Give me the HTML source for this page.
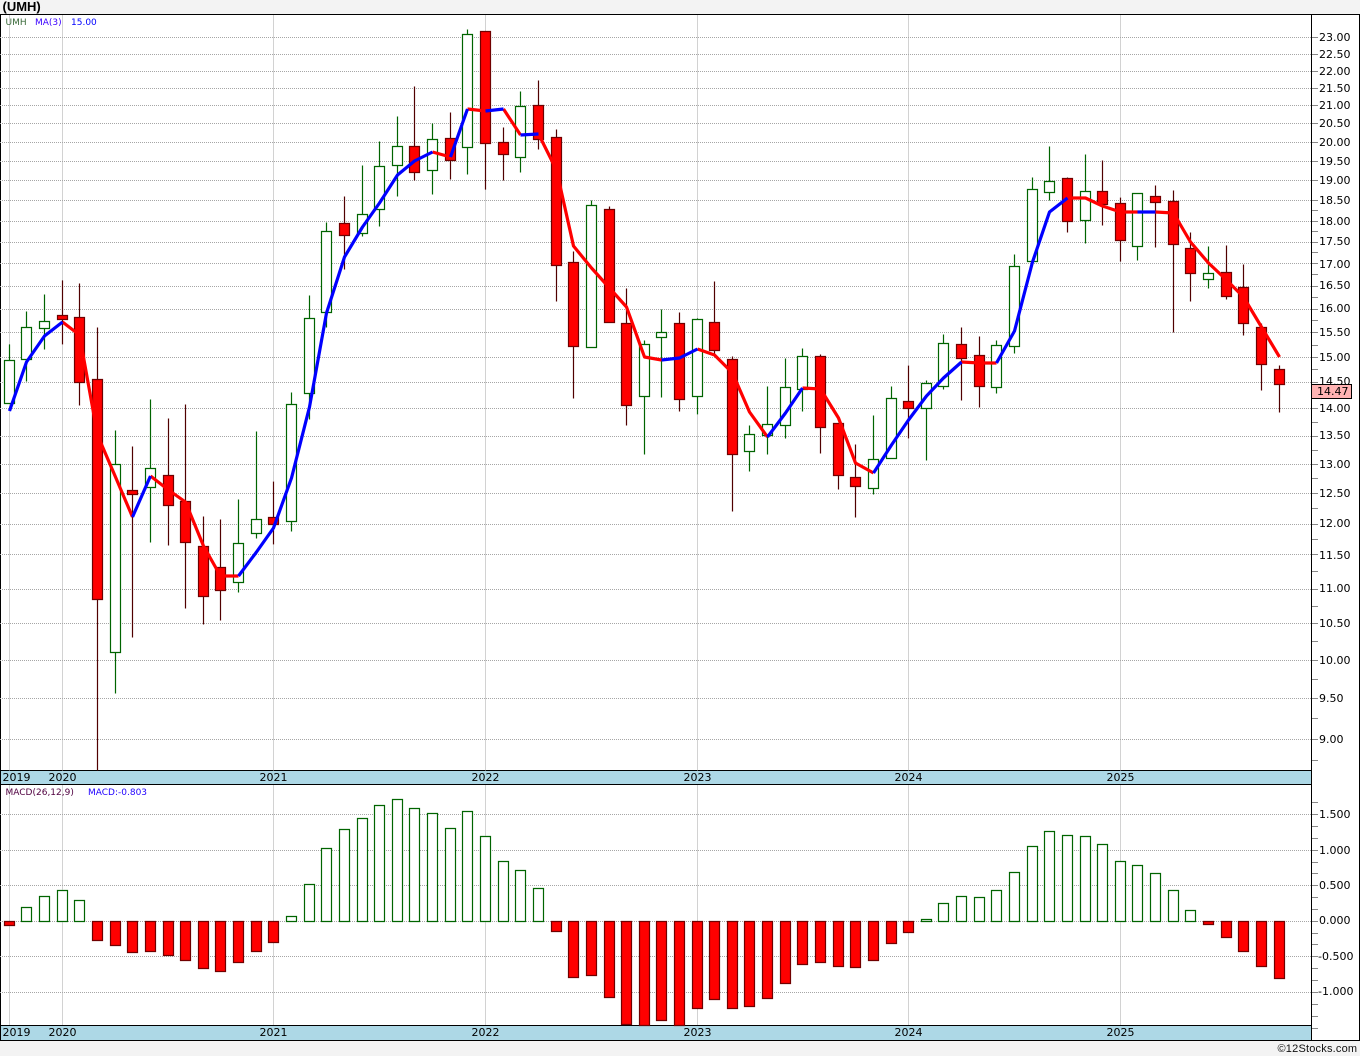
<!DOCTYPE html>
<html><head><meta charset="utf-8"><title>UMH</title>
<style>
html,body{margin:0;padding:0;background:#f3f3f3;width:1360px;height:1056px;overflow:hidden}
svg{display:block}
text{font-family:"DejaVu Sans",sans-serif;font-size:11px;fill:#000}
.s{font-size:9px}
</style></head><body>
<svg width="1360" height="1056" viewBox="0 0 1360 1056" xmlns="http://www.w3.org/2000/svg">
<rect x="0" y="15" width="1360" height="1025" fill="#fff"/>
<rect x="0" y="771" width="1311" height="13" fill="#add8e6"/>
<rect x="0" y="1026" width="1311" height="14" fill="#add8e6"/>
<g fill="none" transform="translate(0,.5)">
<g shape-rendering="crispEdges">
<path stroke="#000" d="M0 14H1360M0 770H1311M0 784H1311M0 1025H1311M0 1040H1360"/>
<path stroke="#000" d="M.5 14V1040M1311.5 14V1040M1359.5 14V1040"/>
<path stroke="#a6a6a6" stroke-dasharray="1 1" d="M0 37H1311M0 54H1311M0 71H1311M0 88H1311M0 105H1311M0 123H1311M0 142H1311M0 161H1311M0 180H1311M0 200H1311M0 221H1311M0 242H1311M0 263H1311M0 286H1311M0 309H1311M0 332H1311M0 357H1311M0 382H1311M0 408H1311M0 436H1311M0 464H1311M0 493H1311M0 524H1311M0 554H1311M0 589H1311M0 623H1311M0 660H1311M0 698H1311M0 739H1311M0 814H1311M0 850H1311M0 885H1311M0 921H1311M0 956H1311M0 992H1311"/>
<path stroke="#a6a6a6" stroke-dasharray="1 1" d="M9.5 15V770M62.5 15V770M273.5 15V770M485.5 15V770M697.5 15V770M908.5 15V770M1120.5 15V770M9.5 785V1025M62.5 785V1025M273.5 785V1025M485.5 785V1025M697.5 785V1025M908.5 785V1025M1120.5 785V1025"/>
<path stroke="#888" d="M1312 37h6M1312 54h6M1312 71h6M1312 88h6M1312 105h6M1312 123h6M1312 142h6M1312 161h6M1312 180h6M1312 200h6M1312 210h6M1312 221h6M1312 231h6M1312 242h6M1312 252h6M1312 263h6M1312 274h6M1312 286h6M1312 297h6M1312 309h6M1312 320h6M1312 332h6M1312 345h6M1312 357h6M1312 369h6M1312 382h6M1312 395h6M1312 408h6M1312 422h6M1312 436h6M1312 450h6M1312 464h6M1312 478h6M1312 493h6M1312 508h6M1312 524h6M1312 539h6M1312 554h6M1312 571h6M1312 589h6M1312 606h6M1312 623h6M1312 641h6M1312 660h6M1312 679h6M1312 698h6M1312 718h6M1312 739h6M1312 760h6M1312 802h6M1312 814h6M1312 826h6M1312 838h6M1312 850h6M1312 862h6M1312 873h6M1312 885h6M1312 897h6M1312 909h6M1312 921h6M1312 933h6M1312 944h6M1312 956h6M1312 968h6M1312 980h6M1312 992h6M1312 1004h6M1312 1016h6M1312 1028h6"/>
</g>
<g stroke-width="1.2">
<path stroke="#006400" d="M9.5 344V403M26.5 311V381M44.5 294V349M115.5 430V693M150.5 399V542M238.5 499V592M256.5 431V538M291.5 392V531M309.5 295V419M326.5 222V327M362.5 165V236M379.5 141V226M397.5 116V196M432.5 123V194M467.5 29V174M520.5 91V172M591.5 200V347M644.5 340V454M661.5 309V397M697.5 318V414M749.5 425V471M767.5 386V454M785.5 358V438M802.5 348V411M873.5 415V494M891.5 386V458M926.5 380V460M943.5 334V389M996.5 340V393M1014.5 254V353M1032.5 177V261M1049.5 146V200M1085.5 154V243M1137.5 193V260M1208.5 246V288"/>
<path stroke="#500000" d="M62.5 280V344M79.5 283V405M97.5 327V770M132.5 446V637M168.5 418V545M185.5 404V608M203.5 516V624M220.5 519V620M273.5 481V544M344.5 196V269M414.5 86V180M450.5 112V179M485.5 31V189M503.5 127V180M538.5 80V149M556.5 129V301M573.5 251V398M609.5 206V322M626.5 288V425M679.5 312V411M714.5 281V354M732.5 356V511M820.5 354V453M838.5 423V489M855.5 444V517M908.5 365V438M961.5 327V400M979.5 336V407M1067.5 177V232M1102.5 160V225M1120.5 197V261M1155.5 185V247M1173.5 190V332M1190.5 232V301M1226.5 245V299M1243.5 264V335M1261.5 323V390M1279.5 365V412"/>
<path stroke="#006400" fill="#fff" d="M4.5 360h10V403h-10zM21.5 327h10V359h-10zM39.5 321h10V328h-10zM110.5 464h10V652h-10zM145.5 468h10V487h-10zM233.5 543h10V582h-10zM251.5 519h10V533h-10zM286.5 404h10V521h-10zM304.5 318h10V393h-10zM321.5 231h10V312h-10zM357.5 214h10V233h-10zM374.5 166h10V209h-10zM392.5 146h10V165h-10zM427.5 139h10V170h-10zM462.5 34h10V147h-10zM515.5 106h10V157h-10zM586.5 205h10V347h-10zM639.5 344h10V396h-10zM656.5 332h10V337h-10zM692.5 319h10V396h-10zM744.5 434h10V451h-10zM762.5 424h10V435h-10zM780.5 387h10V425h-10zM797.5 356h10V389h-10zM868.5 459h10V488h-10zM886.5 398h10V458h-10zM921.5 383h10V408h-10zM938.5 343h10V386h-10zM991.5 345h10V387h-10zM1009.5 266h10V346h-10zM1027.5 189h10V261h-10zM1044.5 181h10V192h-10zM1080.5 191h10V220h-10zM1132.5 193h10V246h-10zM1203.5 273h10V279h-10z"/>
<path stroke="#700000" fill="#f00" d="M57.5 315h10V319h-10zM74.5 317h10V382h-10zM92.5 379h10V599h-10zM127.5 490h10V494h-10zM163.5 475h10V505h-10zM180.5 501h10V542h-10zM198.5 546h10V596h-10zM215.5 567h10V590h-10zM268.5 517h10V524h-10zM339.5 223h10V235h-10zM409.5 146h10V172h-10zM445.5 138h10V160h-10zM480.5 31h10V143h-10zM498.5 142h10V154h-10zM533.5 105h10V139h-10zM551.5 137h10V265h-10zM568.5 262h10V346h-10zM604.5 209h10V322h-10zM621.5 323h10V405h-10zM674.5 323h10V399h-10zM709.5 322h10V350h-10zM727.5 359h10V454h-10zM815.5 356h10V427h-10zM833.5 423h10V475h-10zM850.5 477h10V486h-10zM903.5 401h10V408h-10zM956.5 344h10V358h-10zM974.5 355h10V386h-10zM1062.5 178h10V221h-10zM1097.5 191h10V204h-10zM1115.5 203h10V240h-10zM1150.5 196h10V202h-10zM1168.5 201h10V244h-10zM1185.5 248h10V273h-10zM1221.5 272h10V296h-10zM1238.5 287h10V323h-10zM1256.5 327h10V364h-10zM1274.5 369h10V384h-10z"/>
<path stroke="#006400" fill="#fff" d="M21.5 921V907h10V921zM39.5 921V896h10V921zM57.5 921V890h10V921zM74.5 921V900h10V921zM286.5 921V916h10V921zM304.5 921V884h10V921zM321.5 921V848h10V921zM339.5 921V829h10V921zM357.5 921V818h10V921zM374.5 921V805h10V921zM392.5 921V799h10V921zM409.5 921V808h10V921zM427.5 921V813h10V921zM445.5 921V828h10V921zM462.5 921V811h10V921zM480.5 921V836h10V921zM498.5 921V861h10V921zM515.5 921V870h10V921zM533.5 921V888h10V921zM921.5 921V919h10V921zM938.5 921V903h10V921zM956.5 921V896h10V921zM974.5 921V897h10V921zM991.5 921V890h10V921zM1009.5 921V872h10V921zM1027.5 921V846h10V921zM1044.5 921V831h10V921zM1062.5 921V835h10V921zM1080.5 921V836h10V921zM1097.5 921V844h10V921zM1115.5 921V861h10V921zM1132.5 921V865h10V921zM1150.5 921V873h10V921zM1168.5 921V890h10V921zM1185.5 921V910h10V921z"/>
<path stroke="#700000" fill="#f00" d="M4.5 921h10V925h-10zM92.5 921h10V940h-10zM110.5 921h10V945h-10zM127.5 921h10V952h-10zM145.5 921h10V951h-10zM163.5 921h10V955h-10zM180.5 921h10V960h-10zM198.5 921h10V968h-10zM215.5 921h10V971h-10zM233.5 921h10V962h-10zM251.5 921h10V951h-10zM268.5 921h10V942h-10zM551.5 921h10V931h-10zM568.5 921h10V977h-10zM586.5 921h10V975h-10zM604.5 921h10V997h-10zM621.5 921h10V1024h-10zM639.5 921h10V1025h-10zM656.5 921h10V1020h-10zM674.5 921h10V1025h-10zM692.5 921h10V1008h-10zM709.5 921h10V999h-10zM727.5 921h10V1008h-10zM744.5 921h10V1006h-10zM762.5 921h10V998h-10zM780.5 921h10V983h-10zM797.5 921h10V964h-10zM815.5 921h10V962h-10zM833.5 921h10V966h-10zM850.5 921h10V967h-10zM868.5 921h10V960h-10zM886.5 921h10V943h-10zM903.5 921h10V932h-10zM1203.5 921h10V924h-10zM1221.5 921h10V937h-10zM1238.5 921h10V951h-10zM1256.5 921h10V966h-10zM1274.5 921h10V978h-10z"/>
</g>
</g>
<g fill="none" stroke-width="3.2" stroke-linejoin="round">
<path stroke="#f00" d="M62.5 322L79.5 335L97.5 435L115.5 477L132.5 517M150.5 476L168.5 490L185.5 502L203.5 546L220.5 576L238.5 576M432.5 152L450.5 157M467.5 109L485.5 111M503.5 109L520.5 135M538.5 134L556.5 170L573.5 246L591.5 268L609.5 288L626.5 307L644.5 357L661.5 360M697.5 349L714.5 355L732.5 373L749.5 412L767.5 437M802.5 388L820.5 389L838.5 418L855.5 463L873.5 473M961.5 362L979.5 363L996.5 363M1067.5 198L1085.5 198L1102.5 206L1120.5 212L1137.5 212M1155.5 212L1173.5 213L1190.5 242L1208.5 263L1226.5 280L1243.5 297L1261.5 327L1279.5 357"/>
<path stroke="#00f" d="M9.5 411L26.5 362L44.5 336L62.5 322M132.5 517L150.5 476M238.5 576L256.5 552L273.5 528L291.5 478L309.5 407L326.5 313L344.5 257L362.5 227L379.5 203L397.5 175L414.5 161L432.5 152M450.5 157L467.5 109M485.5 111L503.5 109M520.5 135L538.5 134M661.5 360L679.5 358L697.5 349M767.5 437L785.5 413L802.5 388M873.5 473L891.5 445L908.5 420L926.5 396L943.5 378L961.5 362M996.5 363L1014.5 331L1032.5 262L1049.5 212L1067.5 198M1137.5 212L1155.5 212"/>
</g>
<text x="2.5" y="11" style="font-family:'Liberation Sans',sans-serif;font-size:13px;font-weight:bold;fill:#000">(UMH)</text>
<text class="s" x="5.5" y="25" style="fill:#3a6a3a">UMH</text>
<text class="s" x="35" y="25" style="fill:#3a00ff">MA(3)</text>
<text class="s" x="71" y="25" style="fill:#0000ff">15.00</text>
<text class="s" x="5.5" y="795" style="fill:#500040">MACD(26,12,9)</text>
<text class="s" x="88" y="795" style="fill:#2000ff">MACD:-0.803</text>
<g>
<text x="1319" y="41">23.00</text><text x="1319" y="58">22.50</text><text x="1319" y="75">22.00</text><text x="1319" y="92">21.50</text><text x="1319" y="109">21.00</text><text x="1319" y="127">20.50</text><text x="1319" y="146">20.00</text><text x="1319" y="165">19.50</text><text x="1319" y="184">19.00</text><text x="1319" y="204">18.50</text><text x="1319" y="225">18.00</text><text x="1319" y="245">17.50</text><text x="1319" y="268">17.00</text><text x="1319" y="289">16.50</text><text x="1319" y="312">16.00</text><text x="1319" y="336">15.50</text><text x="1319" y="361">15.00</text><text x="1319" y="385">14.50</text><text x="1319" y="412">14.00</text><text x="1319" y="439">13.50</text><text x="1319" y="468">13.00</text><text x="1319" y="497">12.50</text><text x="1319" y="527">12.00</text><text x="1319" y="559">11.50</text><text x="1319" y="592">11.00</text><text x="1319" y="627">10.50</text><text x="1319" y="664">10.00</text><text x="1319" y="702">9.50</text><text x="1319" y="743">9.00</text>
<text x="1319" y="818">1.500</text><text x="1319" y="854">1.000</text><text x="1319" y="889">0.500</text><text x="1319" y="924">0.000</text><text x="1318" y="960">-0.500</text><text x="1318" y="995">-1.000</text>
</g>
<rect x="1311.5" y="384.5" width="40" height="14" fill="#ffb3b3" stroke="#000" shape-rendering="crispEdges"/>
<text x="1317" y="395">14.47</text>
<g>
<text x="2.5" y="781">2019</text><text x="48.5" y="781">2020</text><text x="259.5" y="781">2021</text><text x="471.5" y="781">2022</text><text x="683.5" y="781">2023</text><text x="894.5" y="781">2024</text><text x="1106.5" y="781">2025</text>
<text x="2.5" y="1036">2019</text><text x="48.5" y="1036">2020</text><text x="259.5" y="1036">2021</text><text x="471.5" y="1036">2022</text><text x="683.5" y="1036">2023</text><text x="894.5" y="1036">2024</text><text x="1106.5" y="1036">2025</text>
</g>
<text x="1277.5" y="1052" style="font-family:'Liberation Sans',sans-serif;font-size:11px;letter-spacing:.2px;fill:#111">©12Stocks.com</text>
</svg>
</body></html>
